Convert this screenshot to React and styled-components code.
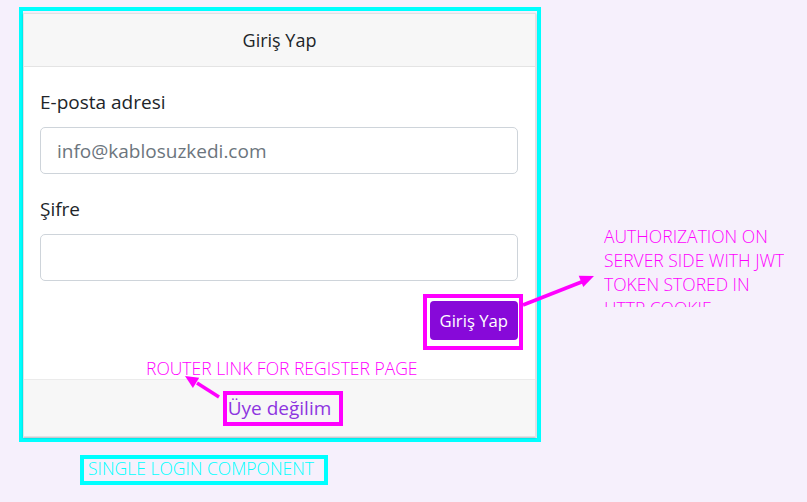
import React from "react";
import styled, { createGlobalStyle } from "styled-components";

const GlobalStyle = createGlobalStyle`
  html, body {
    margin: 0;
    padding: 0;
    background: #f6f0fc;
  }
  body {
    font-family: "Open Sans", "Noto Sans", "DejaVu Sans", sans-serif;
    color: #212529;
  }
  * { box-sizing: border-box; }
`;

export default function App() {
  return (
    <>
      <GlobalStyle />
      <Page>
        <Frame>
          <Card>
            <CardHeader>Giriş Yap</CardHeader>
            <CardBody>
              <Field>
                <Label>E-posta adresi</Label>
                <Input type="email" placeholder="info@kablosuzkedi.com" />
              </Field>
              <Field>
                <Label>Şifre</Label>
                <Input type="password" />
              </Field>
              <Actions>
                <Highlight $top={7} $right={5} $bottom={10} $left={7}>
                  <SubmitButton>Giriş Yap</SubmitButton>
                </Highlight>
              </Actions>
            </CardBody>
            <CardFooter>
              <Highlight $top={2} $right={12} $bottom={3} $left={5}>
                <RegisterLink href="#">Üye değilim</RegisterLink>
              </Highlight>
            </CardFooter>
          </Card>
        </Frame>
        <Caption>SINGLE LOGIN COMPONENT</Caption>

        <Note>ROUTER LINK FOR REGISTER PAGE</Note>
        <SideNote>
          AUTHORIZATION ON
          <br />
          SERVER SIDE WITH JWT
          <br />
          TOKEN STORED IN
          <br />
          HTTP COOKIE
        </SideNote>

        <Arrows width="807" height="502" viewBox="0 0 807 502">
          <line x1="523" y1="305" x2="584" y2="281" stroke="#ff00ff" strokeWidth="3.5" />
          <polygon points="594,276 583.3,286.9 578.7,275.7" fill="#ff00ff" />
          <line x1="219" y1="397" x2="197" y2="383" stroke="#ff00ff" strokeWidth="3.5" />
          <polygon points="185,376 199.2,377.7 192.9,387.9" fill="#ff00ff" />
        </Arrows>
      </Page>
    </>
  );
}

const Page = styled.div`
  position: relative;
  width: 807px;
  height: 502px;
  overflow: hidden;
  padding-top: 7px;
`;

const Frame = styled.div`
  width: 522px;
  margin-left: 19px;
  border: 4px solid #00ffff;
  padding: 2px 1px 1px 0;
`;

const Card = styled.div`
  background: #fff;
  border: 1px solid #e2e2e2;
  box-shadow: 0 1px 2px rgba(0, 0, 0, 0.25);
`;

const CardHeader = styled.div`
  height: 53px;
  display: flex;
  align-items: center;
  justify-content: center;
  background: #f7f7f7;
  border-bottom: 1px solid #e4e4e4;
  font-size: 18px;
  color: #212529;
`;

const CardBody = styled.div`
  padding: 20px 17px 39px 16px;
`;

const Field = styled.div`
  margin-bottom: 20px;
`;

const Label = styled.label`
  display: block;
  font-size: 19px;
  line-height: 30px;
  margin-bottom: 10px;
  color: #212529;
`;

const Input = styled.input`
  display: block;
  width: 100%;
  height: 47px;
  padding: 0 16px;
  font-family: inherit;
  font-size: 19px;
  color: #495057;
  background: #fff;
  border: 1px solid #ced4da;
  border-radius: 5px;
  outline: none;

  &::placeholder {
    color: #6c757d;
  }
`;

const Actions = styled.div`
  display: flex;
  justify-content: flex-end;
  margin-top: 1px;
`;

const Highlight = styled.span`
  position: relative;
  display: inline-block;

  &::after {
    content: "";
    position: absolute;
    top: ${(p) => -p.$top}px;
    right: ${(p) => -p.$right}px;
    bottom: ${(p) => -p.$bottom}px;
    left: ${(p) => -p.$left}px;
    border: 4px solid #ff00ff;
    pointer-events: none;
  }
`;

const SubmitButton = styled.button`
  display: block;
  height: 39px;
  padding: 0 10px;
  font-family: inherit;
  font-size: 16.7px;
  color: #fff;
  background: #8709d9;
  border: none;
  border-radius: 4px;
`;

const CardFooter = styled.div`
  height: 57px;
  display: flex;
  align-items: center;
  justify-content: center;
  background: #f7f7f7;
  border-top: 1px solid #ebebeb;
`;

const RegisterLink = styled.a`
  display: block;
  font-size: 19px;
  line-height: 30px;
  color: #8e35e0;
  text-decoration: none;
`;

const Caption = styled.div`
  display: inline-block;
  margin: 13px 0 0 80px;
  padding: 0 10px 4px 4px;
  border: 4px solid #00ffff;
  font-size: 17.5px;
  font-weight: 300;
  line-height: 18px;
  color: #00ffff;
`;

const Note = styled.div`
  position: absolute;
  left: 146px;
  top: 356px;
  font-size: 17.5px;
  font-weight: 300;
  line-height: 24px;
  color: #ff00ff;
  white-space: nowrap;
`;

const SideNote = styled.div`
  position: absolute;
  left: 604px;
  top: 224px;
  height: 83px;
  overflow: hidden;
  font-size: 17.5px;
  font-weight: 300;
  line-height: 24px;
  color: #ff00ff;
  white-space: nowrap;
`;

const Arrows = styled.svg`
  position: absolute;
  left: 0;
  top: 0;
  pointer-events: none;
`;
